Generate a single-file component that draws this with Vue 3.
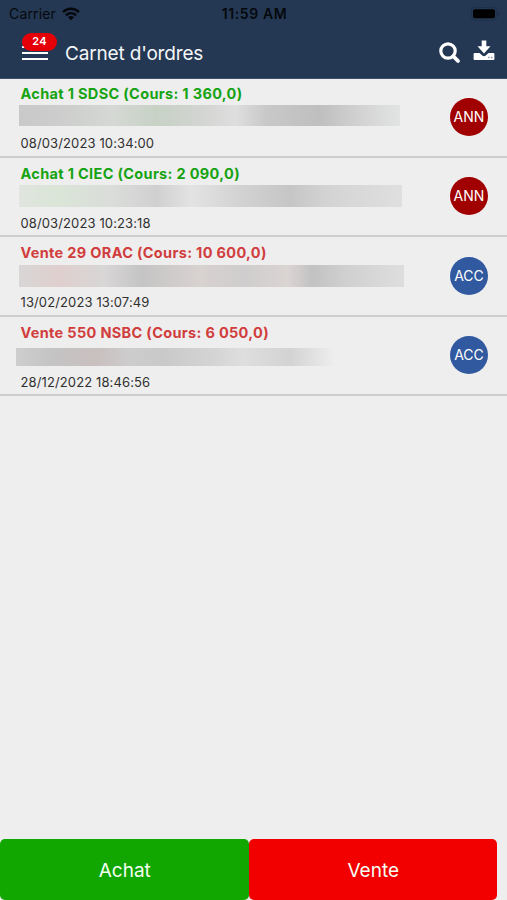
<script setup>
const orders = [
  { id: 'sdsc', side: 'buy', title: 'Achat 1 SDSC (Cours: 1 360,0)', date: '08/03/2023 10:34:00', status: 'ANN' },
  { id: 'ciec', side: 'buy', title: 'Achat 1 CIEC (Cours: 2 090,0)', date: '08/03/2023 10:23:18', status: 'ANN' },
  { id: 'orac', side: 'sell', title: 'Vente 29 ORAC (Cours: 10 600,0)', date: '13/02/2023 13:07:49', status: 'ACC' },
  { id: 'nsbc', side: 'sell', title: 'Vente 550 NSBC (Cours: 6 050,0)', date: '28/12/2022 18:46:56', status: 'ACC' },
]
</script>

<template>
  <div class="screen">
    <header class="header">
      <div class="status-bar">
        <div class="carrier">
          <span>Carrier</span>
          <svg class="wifi" width="18" height="14" viewBox="0 0 18 14">
            <g fill="none" stroke="#05080d" stroke-width="2.6">
              <path d="M1 5.1C5.6.7 12.4.7 17 5.1" />
              <path d="M4 8.2c2.9-2.6 7.1-2.6 10 0" />
            </g>
            <path d="M6 10.2c1.8-1.5 4.2-1.5 6 0l-3 3z" fill="#05080d" />
          </svg>
        </div>
        <span class="clock">11:59 AM</span>
        <svg class="battery" width="29" height="14" viewBox="0 0 29 14">
          <rect x=".5" y=".5" width="25" height="12.5" rx="3.5" fill="none" stroke="#1f3049" />
          <rect x="2" y="2.3" width="22" height="9" rx="2" fill="#000" />
          <path d="M27 4.8c2 .7 2 3.3 0 4z" fill="#1b2b43" />
        </svg>
      </div>
      <div class="nav-bar">
        <button class="menu" aria-label="Menu">
          <span class="line"></span>
          <span class="line"></span>
          <span class="line"></span>
          <span class="count">24</span>
        </button>
        <h1>Carnet d'ordres</h1>
        <svg class="search" width="22" height="22" viewBox="0 0 22 22">
          <circle cx="9" cy="9" r="7.2" fill="none" stroke="#fff" stroke-width="3.2" />
          <path d="M14.2 14.2l4.8 4.8" stroke="#fff" stroke-width="3.8" stroke-linecap="round" />
        </svg>
        <svg class="download" width="22" height="21" viewBox="0 0 22 21">
          <path d="M1.6 13h4.9l2.7 2.5q1.8 1.5 3.6 0l2.7-2.5h4.9q1 0 1 1v5q0 1-1 1H1.6q-1 0-1-1v-5q0-1 1-1z" fill="#fff" />
          <path d="M8.7.5h4.6v5.8h4.2L11 13.5 4.5 6.3h4.2z" fill="#fff" />
          <path d="M15.2 16.8h1.4v1.5h-1.4zM18.1 16.8h1.4v1.5h-1.4z" fill="#8490a2" />
        </svg>
      </div>
    </header>

    <main class="orders">
      <article v-for="order in orders" :key="order.id" class="order" :class="[order.side, order.id]">
        <div class="details">
          <h2>{{ order.title }}</h2>
          <div class="masked"></div>
          <time>{{ order.date }}</time>
        </div>
        <span class="badge" :class="order.status.toLowerCase()">{{ order.status }}</span>
      </article>
    </main>

    <footer class="actions">
      <button class="buy-button">Achat</button>
      <button class="sell-button">Vente</button>
    </footer>
  </div>
</template>

<style>
body { margin: 0; background: #eee; }
</style>

<style scoped>
.screen {
  display: flex;
  flex-direction: column;
  width: 507px;
  height: 900px;
  overflow: hidden;
  background: #eee;
  font-family: Inter, sans-serif;
  color: #303030;
}
.screen * { box-sizing: border-box; }
button { border: 0; padding: 0; font: inherit; }
h1, h2 { margin: 0; }
.header {
  flex: none;
  height: 79px;
  background: #243853;
  border-bottom: 1px solid #41516a;
}
.status-bar {
  display: grid;
  grid-template-columns: 1fr auto 1fr;
  align-items: center;
  height: 27px;
  padding: 0 7px 0 9px;
  color: #05080d;
  font-size: 14px;
  line-height: 20px;
}
.carrier { display: flex; align-items: center; gap: 6px; letter-spacing: .15px; }
.wifi { display: block; }
.clock { font-weight: 600; letter-spacing: .6px; }
.battery { justify-self: end; }
.nav-bar {
  display: flex;
  align-items: center;
  height: 51px;
  padding: 0 12px 0 22px;
}
.menu {
  position: relative;
  display: flex;
  flex-direction: column;
  gap: 4px;
  width: 26px;
  margin-right: 17px;
  background: none;
}
.line { height: 2px; background: #fff; }
.count {
  position: absolute;
  left: 0;
  top: -13px;
  width: 35px;
  height: 18px;
  border-radius: 9px;
  background: #e50008;
  color: #fff;
  font-size: 11px;
  font-weight: 600;
  letter-spacing: .3px;
  line-height: 17px;
  text-align: center;
}
h1 {
  flex: 1;
  padding-top: 2px;
  color: #f4f6f8;
  font-size: 19px;
  font-weight: 400;
  letter-spacing: -.17px;
  line-height: 26px;
}
.search { margin-right: 12px; }
.download { margin-top: -4px; }
.orders { flex: 1; }
.order {
  display: flex;
  align-items: center;
  justify-content: space-between;
  height: 79.5px;
  padding-right: 19px;
  border-bottom: 2px solid #cdcdcd;
}
.order:first-child { height: 78.5px; }
.details { display: flex; flex-direction: column; align-self: stretch; padding: 6px 0 0 20.5px; }
.sdsc .details { padding-top: 5px; }
h2 { width: max-content; font-size: 14.5px; font-weight: 700; letter-spacing: .33px; line-height: 20px; }
.buy h2 { color: #16a313; }
.sell h2 { color: #d13d3d; }
time { width: max-content; margin-top: 6px; font-size: 13px; letter-spacing: .12px; line-height: 20px; }
.masked { width: 381px; height: 21px; margin: 1px 0 0 -2px; }
.sdsc time { margin-top: 7px; }
.sdsc .masked { background: linear-gradient(90deg, #c8c9c8, #cccdcc 10%, #d5d8d4 25%, #c7d2c5 36%, #d2d4d1 47%, #dedede 57%, #c8c8c8 65%, #bfbfbf 79%, #d1d1d1 89%, #e2e4e3); }
.ciec .masked { width: 383px; height: 22px; background: linear-gradient(90deg, #e0e5df, #dae5d7 10%, #dadcda 25%, #d0d0d0 36%, #e3e3e3 45%, #d2d2d2 58%, #c6c6c6 71%, #d4d4d4 81%, #dfdfdf); }
.orac .masked { width: 385px; height: 22px; margin-top: 2px; background: linear-gradient(90deg, #d8d6d6, #dfcfce 10%, #d8d6d6 22%, #c5c4c4 32%, #d8d2d1 47%, #cfcdcd 58%, #dad4d3 70%, #c2c2c2 76%, #d0d0d0 85%, #dedede); }
.orac time { margin-top: 5px; }
.nsbc .masked { width: 319px; height: 18px; margin: 5px 0 0 -5px; background: linear-gradient(90deg, #cecece, #c4c4c4 11%, #c9bfbf 25%, #cdcdcd 36%, #c9c9c9 46%, #d4d4d4 62%, #dedede 71%, #d3d3d3 86%, #eee); }
.badge {
  width: 38px;
  height: 38px;
  border-radius: 50%;
  color: #fff;
  font-size: 14px;
  line-height: 38px;
  text-align: center;
}
.ann { background: #a00000; }
.acc { background: #3059a0; }
.actions { display: flex; flex: none; width: 497px; height: 61px; }
.actions button {
  flex: 1;
  padding: 2px 0 0 1px;
  border-radius: 5px;
  color: #f5fff3;
  font-size: 19px;
}
.buy-button { background: #12a600; }
.sell-button { background: #f20000; }
</style>
